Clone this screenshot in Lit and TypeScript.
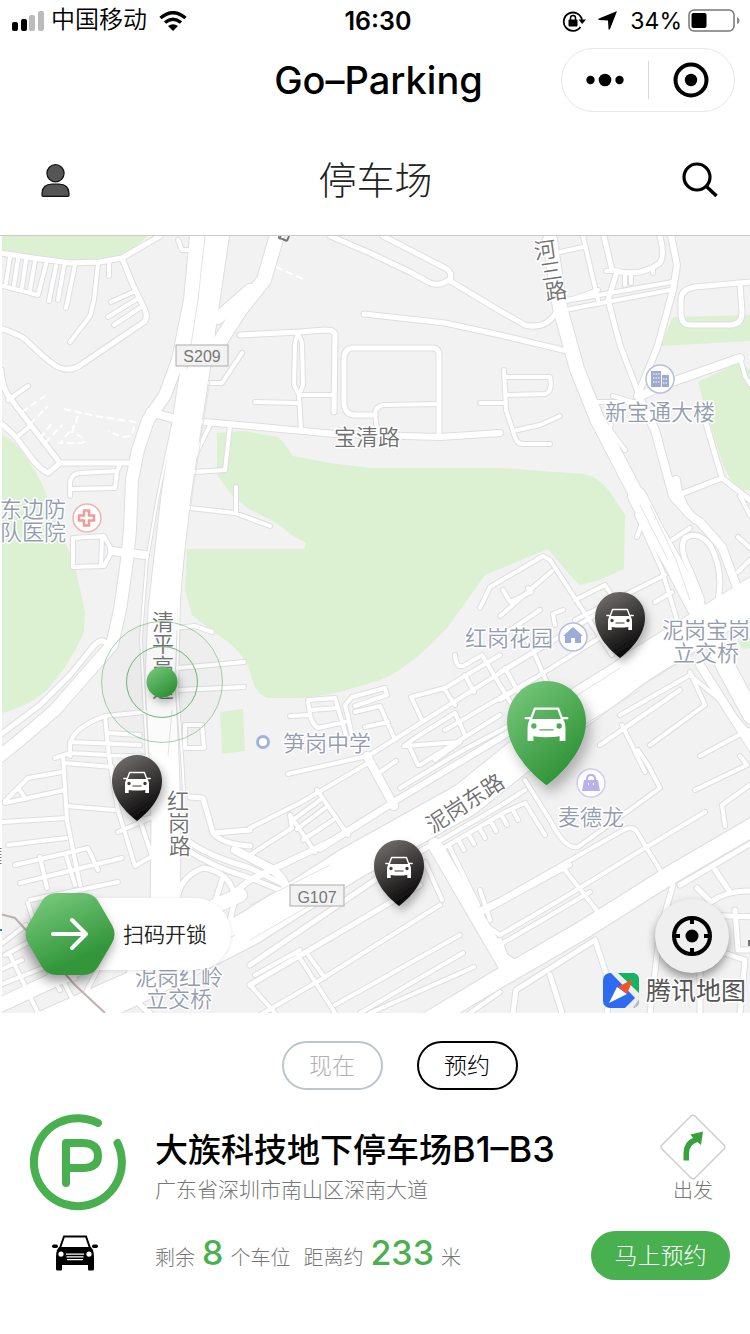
import { LitElement, html, svg, css } from "lit";
import { customElement, state } from "lit/decorators.js";
import { classMap } from "lit/directives/class-map.js";

/* Map data. Every coordinate is in the viewBox "0 236 750 777". */
const PARKS = [
  "M0 236H148L125 255Q100 260 67 260L0 251Z",
  "M2 434Q22 444 43 486L60 530L75 566L85 612L84 632Q70 665 45 692Q25 708 2 713Z",
  "M217 433L245 431L278 437L284 443L293 456L330 463L370 468L500 468L585 474Q600 478 610 492L625 515L624 569L600 580L580 585L568 573L548 549L485 575L448 627Q420 658 390 676Q340 695 300 698L268 698Q255 695 250 672Q243 650 215 633L192 615L185 590L187 549H304L306 543L290 534Q280 523 250 510L232 495L217 475Z",
  "M673 317L750 315V341L660 346Z",
  "M698 382L740 362L750 370V490L740 490Q728 480 722 462L712 430Z",
  "M220 712L243 709L245 751L222 754Z",
  "M738 641L750 638V648L742 649Z",
];

const ROADS: [number, string][] = [
  [2, "M173 425L158 496L147 560L143 610L141 640L147 756L150 800M198 432L186 510L179 600L177 690L182 756L184 790"],
  [4, "M10 257L6 283M18 259L14 285M26 260L22 287M35 261L30 290M3 286L38 295L46 264M56 266L49 301M64 266L58 300M75 265L66 308M98 264L94 300L90 316L70 342M109 263V276M133 292L111 302M137 299L108 317M141 307L114 325M8 400L28 386M17 437L30 426M178 240L182 250H192"],
  [4, "M298 334Q295 340 295 345L294 385L299 395L301 430M298 334Q302 340 302 345L303 385L299 395H333M255 402L298 403M210 383H222L242 353M230 426L225 470L194 472M210 425L192 462M190 508L235 513L270 526M236 513V487"],
  [4, "M375 415L378 435M375 415Q375 406 384 405L439 404M504 370L506 410L513 431Q516 444 522 444H550M504 403H480M504 377H550Q553 392 545 394L505 395M513 431L540 425L560 416"],
  [4, "M560 252L583 247M583 236L598 300M560 300L573 299L598 290M606 271H616M625 275V285M631 275V283M653 267V273M565 301L672 282M565 310L670 290M613 396L632 402M590 402L640 402M613 405L610 430L625 450M740 358L745 376L750 384"],
  [4, "M70 496V482Q72 473 80 473L117 471L120 465M117 471L115 488L72 489M73 538L104 536L112 551L104 566L73 567ZM102 537L101 565M175 628L195 626L212 632M178 668L244 662M178 690L244 687"],
  [4, "M70 756L70 745Q72 728 105 716L145 712M105 716L109 756L118 810L135 866L152 856L140 820L155 817M70 742L140 745M108 733L140 735M185 725H202L204 748H185ZM55 758L70 753L147 757M118 832L150 818"],
  [4, "M63 756L67 820L80 885M65 763L112 767M66 806L114 810M5 801L28 778L62 772M5 803L65 790M18 788L26 799M3 822L66 818M8 845L66 838M15 865L88 848L98 870M20 883L122 858M40 857L47 888M66 855L75 885M30 900L118 882M28 903L35 925"],
  [4, "M0 945L26 925M5 955L60 925M0 985L50 965L90 960M10 955L38 1013M0 1000L75 978M60 975L80 1013M30 940L60 990M100 965L82 1000M0 970L22 960"],
  [5, "M190 797L203 798L213 833L250 830M213 833Q222 844 250 846M187 840Q205 855 250 868L285 885L287 917M187 850Q215 868 250 878L280 890M178 915Q172 880 203 868Q232 872 235 900L230 920M222 880L214 905M130 965Q128 1000 150 1013"],
  [4, "M288 774L367 756M250 828L300 803L370 762M317 790L348 835M290 815L315 852M250 855L292 828L290 815M293 820L320 800M297 829L325 808M303 840L333 820M380 772L396 761M400 788L460 752L520 720M410 748L418 765M320 850L390 806"],
  [4, "M290 716L310 715L308 700L335 698L346 735M310 710L338 708M310 715Q312 724 318 728L345 722M352 735L345 705L352 697L385 688L387 695L355 706M355 712L380 706L395 740M365 727L388 722"],
  [4, "M365 758L500 673L600 612M422 720L411 697L445 688L500 655M435 760L460 742L404 746L415 738L455 713L465 735M420 765L500 715M445 690L455 705M465 675L474 692M482 655L512 705M455 655Q456 670 465 665L482 655M445 730L500 698L535 678"],
  [4, "M480 608L490 587L543 556L550 560L612 655M500 616L552 571M503 590L510 602L531 592L528 588M555 625L553 614L563 610M575 600L605 585L615 600M575 620L665 575M500 637L540 610M535 655L550 690M500 672L545 645M520 627L530 645M505 668L520 695M500 700L620 625M655 602L672 592"],
  [4, "M690 672L705 705L650 745M715 695L760 745M620 715L690 675L720 700M622 725L645 772M600 745L680 690M640 510L643 520L637 537M637 515L662 570L677 620M672 540L690 528M738 537L750 548M738 572L750 560M740 496L750 515"],
  [4, "M440 850L505 812L525 803L545 835M436 843L500 806L525 790M450 848L478 905M459 841L464 850M469 835L474 844M480 829L485 838M491 822L496 831M502 816L507 825M513 810L518 820M475 912L500 900L620 832Q633 824 637 832L660 870"],
  [4, "M500 935L560 900L645 848L705 812M565 870L598 912M503 943L590 892M500 940L505 955L516 963M525 780L550 820Q565 850 578 847L660 788L648 765L638 750M695 790L747 765L740 756M725 826L722 805L750 785M700 756L748 730"],
  [5, "M513 1013L516 990L595 940L610 985L607 1013M550 975L562 1013M673 885L660 930L650 1013M680 885L760 838M715 870L730 892M697 888L711 902Q730 888 760 892M735 910L738 950H760M700 915L760 917M715 950L745 960L740 1013M700 960V1013"],
  [4, "M320 980L440 905M320 980L260 1015M298 955L335 1013M306 952L325 978M250 985L275 1013M255 975L300 950M335 1005L460 935M360 1013L463 953M370 1013L474 967M470 1013L500 992M425 862L442 900M480 890L490 920M478 915L570 865M485 925L500 935"],
  [5, "M0 253L33 258L70 263L100 262L122 258L160 236M122 258L132 283L145 310Q148 318 144 322L82 364Q72 372 60 368Q50 364 25 339Q18 334 0 328M1 370Q2 388 10 398L60 463H130M60 463L48 473Q38 468 30 456L15 436L0 422"],
  [5, "M240 335L300 332L325 330Q336 330 335 336L334 412M353 348H432Q439 348 439 355V435M353 348Q344 348 344 360V405Q346 415 355 415H375M364 314L445 323L500 335L567 351M330 236L370 253L410 272L430 283Q440 287 450 279M383 236L445 268Q453 272 450 281L500 311L525 325Q545 330 556 313"],
  [5, "M604 236L612 270Q640 278 660 263Q665 255 660 236M616 275L608 300L620 345L638 392M750 282L695 287Q681 289 681 300V315Q682 325 690 325H730Q742 325 742 312L740 284M705 420L722 478L750 500M722 478L676 496"],
  [5, "M105 642Q100 638 92 648L70 675L40 705L0 735M718 600Q724 570 710 545Q698 530 685 538Q678 548 690 570L702 600M435 843L400 863L250 965M250 985L420 885"],
  [6, "M205 422L250 426L335 434L440 437L500 433M670 230L677 265L673 290L658 345L645 378L637 396M760 578L600 675L500 738L400 798L330 842L250 880L235 892"],
  [8, "M640 396L672 382L740 358M112 551L145 555M150 412L172 418M640 400L655 430L673 496L690 515M676 480Q680 512 700 522L722 547L738 590M367 756L394 806M700 665L760 760M287 905Q290 880 270 868L235 850"],
  [12, "M196 236L190 300L178 360L165 395L148 420L138 450L132 480L130 530L127 560L120 610L112 645L90 670L55 710L20 740L-5 760M250 290L218 318"],
  [14, "M435 845L505 965M550 240L560 308L577 369L597 419L637 496M280 225L264 280L240 310L208 360M240 895L150 935L0 1005"],
  [18, "M637 496L657 535L673 563L697 609L727 669L752 715M770 817L667 877L583 930L500 978L430 1020"],
  [29, "M216 225L205 300L195 370L176 496L163 610L160 680L164 756L166 820L165 930"],
  [34, "M770 585L640 665L546 735L465 800L350 864L250 928L130 990L40 1030"],
];

const LANES =
  "M205 236L198 300L187 370M210 380L190 510M172 710L168 756M640 505L668 560M650 505L676 560L690 600M250 905L330 865M250 940L345 885M520 732L620 668M560 740L640 690M430 835L500 790M140 985L235 935M635 690L700 650";

const TRAILS =
  "M22 412L45 396M30 424L48 406M64 409L95 416L135 422L132 435Q122 440 108 430M78 416L72 432Q90 440 82 443H60L75 425M45 443L62 425M40 438L54 421M276 267L303 279";

/* text, centre x, baseline y, kind, rotation in degrees */
const LABELS: [string, number, number, string, number?][] = [
  ["宝清路", 367, 445, "road"],
  ["新宝通大楼", 660, 420, "poi"],
  ["东边防", 33, 517, "poi"],
  ["队医院", 33, 540, "poi"],
  ["红岗花园", 509, 646, "poi"],
  ["泥岗宝岗", 706, 638, "poi"],
  ["立交桥", 706, 661, "poi"],
  ["笋岗中学", 327, 751, "poi"],
  ["麦德龙", 591, 825, "poi"],
  ["泥岗红岭", 179, 985, "poi"],
  ["立交桥", 179, 1007, "poi"],
  ["泥岗东路", 465, 811, "road", -33],
  ["河", 545, 258, "road", -8], ["三", 551, 279, "road", -8], ["路", 556, 299, "road", -8],
  ["清", 163, 630, "road"], ["平", 163, 652, "road"], ["高", 163, 674, "road"], ["速", 163, 697, "road"],
  ["红", 178, 809, "road"], ["岗", 179, 831, "road"], ["路", 180, 854, "road"],
];

const PINS = [
  { x: 595, y: 592, scale: 1, tone: "dark" },
  { x: 112, y: 755, scale: 1, tone: "dark" },
  { x: 374, y: 840, scale: 1, tone: "dark" },
  { x: 507, y: 681, scale: 1.58, tone: "green" },
];

const pin = (p: (typeof PINS)[number]) => svg`
  <g transform="translate(${p.x} ${p.y}) scale(${p.scale})">
    <path fill="url(#${p.tone})" filter="url(#drop)"
      d="M25 0C11 0 0 11 0 26C0 42 13 57 25 66C37 57 50 42 50 26C50 11 39 0 25 0Z"/>
    <g transform="translate(11 16.5)">
      <path fill="none" stroke="#fff" stroke-width="1.4" stroke-linejoin="round" stroke-linecap="round"
        d="M4 8L6.600 1H21.400L24 8M.8 7H3.500M24.500 7H27.200"/>
      <path fill="#fff" fill-rule="evenodd"
        d="M3.500 7.600H24.500Q26 10 26 13V21.500H22.300V18.500Q14 19.600 5.700 18.500V21.500H2V13Q2 10 3.500 7.600ZM6 10.300A1.700 1.700 0 1 0 6 13.700A1.700 1.700 0 1 0 6 10.300ZM22 10.300A1.700 1.700 0 1 0 22 13.700A1.700 1.700 0 1 0 22 10.300ZM9.500 14H18.500V14.900H9.500Z"/>
    </g>
  </g>`;

@customElement("parking-map")
class ParkingMap extends LitElement {
  static styles = css`
    :host { display: block; position: relative; aspect-ratio: 750 / 777; overflow: hidden; background: #f2f2f2; }
    .canvas { display: block; width: 100%; height: 100%; }
    .label { font-family: "Noto Sans CJK SC", sans-serif; font-size: 22px; font-weight: 350; text-anchor: middle;
      paint-order: stroke; stroke: #fff; stroke-width: 3px; stroke-linejoin: round; }
    .road { fill: #707070; }
    .poi { fill: #949cb0; }
    .shield { font-family: "Liberation Sans", sans-serif; font-size: 16px; fill: #777; text-anchor: middle; }
    .brand { font-family: "Noto Sans CJK SC", sans-serif; font-size: 25px; font-weight: 400; fill: #555;
      paint-order: stroke; stroke: #fff; stroke-width: 3px; }
    button { border: 0; padding: 0; background: none; cursor: pointer; font-family: Inter, "Noto Sans CJK SC", sans-serif; }
    .unlock { position: absolute; left: 25px; bottom: 38px; display: flex; align-items: center; }
    .hex { width: 90px; height: 82px; overflow: visible; position: relative; z-index: 1; filter: drop-shadow(-2px 6px 6px rgba(0, 0, 0, .4)); }
    .pill { margin-left: -50px; padding: 0 24px 2px 58px; height: 70px; display: flex; align-items: center;
      background: #fff; border-radius: 0 36px 36px 0; font-size: 21px; font-weight: 350; color: #222; box-shadow: 0 1px 4px rgba(0, 0, 0, .1); }
    .locate { position: absolute; right: 21px; bottom: 40px; width: 74px; height: 74px; border-radius: 50%;
      background: #efefef; display: grid; place-items: center; box-shadow: 0 5px 10px rgba(0, 0, 0, .4); }
  `;

  render() {
    return html`
      <svg class="canvas" viewBox="0 236 750 777" preserveAspectRatio="xMidYMid slice" aria-label="停车场地图">
        <defs>
          <linearGradient id="green" x1="0" y1="0" x2=".7" y2="1">
            <stop offset="0" stop-color="#7ccb80"/><stop offset="1" stop-color="#2b9033"/>
          </linearGradient>
          <linearGradient id="dark" x1=".2" y1="0" x2=".6" y2=".9">
            <stop offset="0" stop-color="#736e6d"/><stop offset="1" stop-color="#0e0e0e"/>
          </linearGradient>
          <filter id="drop" x="-30%" y="-20%" width="170%" height="160%">
            <feDropShadow dx="3" dy="5" stdDeviation="4" flood-opacity=".28"/>
          </filter>
        </defs>
        <rect y="236" width="750" height="777" fill="#f2f2f2"/>
        ${PARKS.map((d) => svg`<path d=${d} fill="#dcf1d2"/>`)}
        <g fill="none" stroke="#dedee1" stroke-linejoin="round" stroke-linecap="round">
          ${ROADS.map(([w, d]) => svg`<path d=${d} stroke-width=${w + 2}/>`)}
        </g>
        <g fill="none" stroke="#fff" stroke-linejoin="round" stroke-linecap="round">
          ${ROADS.map(([w, d]) => svg`<path d=${d} stroke-width=${w}/>`)}
        </g>
        <path d=${LANES} fill="none" stroke="#e3e3e5"/>
        <path d=${TRAILS} fill="none" stroke="#fff" stroke-width="2" stroke-dasharray="7 4"/>
        <path d="M0 914L15 918L35 940L75 985L105 1013" fill="none" stroke="#c4adad" stroke-width="2"/>
        <rect x="0" y="236" width="2" height="777" fill="#fff"/>
        <path d="M0 848V866" stroke="#777" stroke-width="3" stroke-dasharray="1 2"/>
        <path d="M0 930H2" stroke="#3d7f9a" stroke-width="2"/>
        <path d="M278 237L287 241M281 236L279 239M289 236L287 241" stroke="#777" stroke-width="2"/>
        <path d="M749 940V946" stroke="#777" stroke-width="2"/>

        <g fill="#f2f2f2" stroke="#ababab">
          <rect x="176" y="345" width="52" height="21"/>
          <rect x="290" y="885" width="54" height="21"/>
        </g>
        <text class="shield" x="202" y="362">S209</text>
        <text class="shield" x="317" y="903">G107</text>

        ${LABELS.map(([t, x, y, kind, turn]) => svg`
          <text class="label ${kind}" x=${x} y=${y} transform="rotate(${turn ?? 0} ${x} ${y - 8})">${t}</text>`)}

        <g fill="#fff" stroke-width="1.500">
          <circle cx="660" cy="379" r="14" stroke="#b9c1d9"/>
          <circle cx="573" cy="637" r="14" stroke="#b9c1d9"/>
          <circle cx="591" cy="783" r="14" stroke="#d3cdf0"/>
          <circle cx="87" cy="518" r="14" stroke="#f0b4b4"/>
        </g>
        <path fill="#9dabd2" d="M651 371H661V387H651ZM662 375H669V387H662Z"/>
        <path d="M653 374H660M653 378H660M653 382H660M663 379H667M663 383H667" stroke="#fff" stroke-dasharray="1.500 1"/>
        <path fill="#9dabd8" d="M573 627L583 636H581V643H575V638H571V643H565V636H563Z"/>
        <path fill="#bab0ee" d="M584 780H598L600 791H582Z"/>
        <path d="M587 782V779Q587 775 591 775Q595 775 595 779V782" fill="none" stroke="#bab0ee" stroke-width="2"/>
        <path d="M588 784H589M593 784H594" stroke="#fff" stroke-width="2"/>
        <path d="M84 510.500H89V515.500H94V520.500H89V525.500H84V520.500H79V515.500H84Z" fill="#fff" stroke="#f29a9a" stroke-width="2.500"/>
        <circle cx="263" cy="742" r="5.500" fill="#fff" stroke="#a3b3d8" stroke-width="3"/>

        <g fill="rgba(120,130,120,.03)" stroke="#6fb377">
          <circle cx="162" cy="682" r="60.500" stroke-opacity=".6"/>
          <circle cx="162" cy="682" r="35.500"/>
        </g>
        <circle cx="162" cy="682" r="15.500" fill="url(#green)" filter="url(#drop)"/>
        ${PINS.map(pin)}

        <g>
          <rect x="603" y="973" width="36" height="35" rx="7" fill="#2f6bf0"/>
          <path d="M617 973H632Q639 973 639 980V994Z" fill="#12b563"/>
          <path d="M611 973H618L639 993V1002Z" fill="#eee"/>
          <path d="M639 999V1001Q639 1008 632 1008H625Z" fill="#bcbcbc"/>
          <path d="M633 1008H625L639 994V999Z" fill="#eee"/>
          <path d="M617 987L627 994L609 1003Z" fill="#fff"/>
          <path d="M633 979L618 987L627 994Z" fill="#f4512c"/>
        </g>
        <text class="brand" x="646" y="1000">腾讯地图</text>
      </svg>

      <button class="unlock">
        <svg class="hex" viewBox="0 0 90 82" aria-hidden="true">
          <defs><linearGradient id="hexfill" x1=".1" y1="0" x2=".6" y2="1">
            <stop offset="0" stop-color="#7bcc80"/><stop offset=".85" stop-color="#33963a"/>
          </linearGradient></defs>
          <path fill="url(#hexfill)" d="M32 0H58Q68 0 73 8L87 32Q92 41 87 50L73 74Q68 82 58 82H32Q22 82 17 74L3 50Q-2 41 3 32L17 8Q22 0 32 0Z"/>
          <path d="M28 41H60M47 27L61 41L47 55" fill="none" stroke="#fff" stroke-width="4" stroke-linecap="round" stroke-linejoin="round"/>
        </svg>
        <span class="pill">扫码开锁</span>
      </button>

      <button class="locate" aria-label="定位">
        <svg width="40" height="40" viewBox="0 0 40 40">
          <circle cx="20" cy="20" r="18" fill="none" stroke="#000" stroke-width="4"/>
          <circle cx="20" cy="20" r="6.500"/>
          <path d="M20 2V8M20 32V38M2 20H8M32 20H38" stroke="#000" stroke-width="4"/>
        </svg>
      </button>
    `;
  }
}

@customElement("app-root")
class AppRoot extends LitElement {
  @state() private mode: "now" | "reserve" = "reserve";

  static styles = css`
    :host { display: block; background: #fff; color: #000; font-family: Inter, "Noto Sans CJK SC", sans-serif; }
    * { box-sizing: border-box; }
    svg { display: block; flex: none; }
    button { font-family: inherit; border: 0; padding: 0; background: none; color: inherit; cursor: pointer; }
    h1, h2, p { margin: 0; font-weight: inherit; }

    .status { display: grid; grid-template-columns: 1fr auto 1fr; align-items: center; height: 41px; padding: 0 10px 0 12px; }
    .carrier, .power { display: flex; align-items: center; }
    .carrier { font-size: 24px; line-height: 32px; gap: 7px; font-weight: 350; }
    .carrier span { padding-bottom: 2px; }
    .wifi { margin-left: 5px; }
    .time { font-size: 25px; line-height: 32px; font-weight: 600; padding-left: 4px; }
    .power { justify-content: flex-end; font-size: 23px; gap: 6px; }
    .arrow { margin: 0 7px 0 6px; }

    .title-bar { display: grid; grid-template-columns: 1fr auto 1fr; align-items: center; height: 78px; padding: 0 15px 0 22px; }
    .app-name { grid-column: 2; font-size: 38px; line-height: 48px; font-weight: 500; }
    .capsule { justify-self: end; display: flex; align-items: center; width: 174px; height: 64px; border: 1px solid #e8e8e8; border-radius: 32px; }
    .capsule button { flex: 1; display: grid; place-items: center; }
    .rule { width: 1px; height: 38px; background: #d9d9d9; }

    .page-bar { display: flex; align-items: center; justify-content: space-between; height: 117px; padding: 7px 31px 0 41px; border-bottom: 1px solid #c9cbc9; }
    .page-name { font-size: 38px; line-height: 54px; font-weight: 300; color: #222; padding-bottom: 2px; }

    .tabs { display: flex; justify-content: center; gap: 34px; padding: 28px 0 24px 49px; }
    .tab { width: 101px; height: 49px; border: 2px solid #bcc6cf; border-radius: 25px; font-size: 23px; font-weight: 300; color: #b0b0b0; padding-bottom: 4px; }
    .tab.active { border-color: #000; color: #000; }

    .lot { display: grid; grid-template-columns: 97px 1fr auto; column-gap: 28px; row-gap: 20px; align-items: start; padding: 0 20px 54px 30px; }
    .intro { padding-top: 12px; }
    .name { font-size: 33px; line-height: 48px; font-weight: 500; }
    .levels { font-size: 36px; line-height: 1; }
    .address { font-size: 21px; line-height: 32px; font-weight: 300; color: #777; }
    .go { justify-self: end; margin-right: 4px; display: flex; flex-direction: column; align-items: center; font-size: 20px; line-height: 22px; font-weight: 300; color: #777; }
    .car { justify-self: center; margin: 4px 8px 0 0; }
    .facts { display: flex; align-items: baseline; gap: 7px; height: 49px; font-size: 20px; line-height: 44px; font-weight: 300; color: #777; white-space: nowrap; }
    .facts strong { font-size: 34px; font-weight: 500; color: #49b04f; }
    .gap { margin-left: 6px; }
    .reserve { width: 139px; height: 49px; border-radius: 25px; background: #49b04f; color: #fff; font-size: 23px; font-weight: 300; padding-bottom: 3px; }
  `;

  render() {
    return html`
      <div class="status">
        <div class="carrier">
          <svg width="32" height="20" viewBox="0 0 32 20">
            <rect y="11" width="6" height="9" rx="2"/><rect x="9" y="8" width="6" height="12" rx="2"/>
            <rect x="17" y="4" width="6" height="16" rx="2" fill="#bbb"/><rect x="26" width="6" height="20" rx="2" fill="#bbb"/>
          </svg>
          <span>中国移动</span>
          <svg class="wifi" width="28" height="20" viewBox="0 0 28 20">
            <path d="M1.500 7Q14 -3.500 26.500 7M6 11.500Q14 5 22 11.500" fill="none" stroke="#000" stroke-width="3.500"/>
            <path d="M9 15Q14 11.500 19 15L14 20Z"/>
          </svg>
        </div>
        <span class="time">16:30</span>
        <div class="power">
          <svg width="24" height="22" viewBox="0 0 24 22">
            <path d="M18.500 17A9.200 9.200 0 1 1 20 10" fill="none" stroke="#000" stroke-width="1.800"/>
            <path d="M16.500 9.500H24L20.200 14Z"/>
            <rect x="6.500" y="9.500" width="9" height="7" rx="1"/>
            <path d="M8.500 10V8Q8.500 5.500 11 5.500Q13.500 5.500 13.500 8V10" fill="none" stroke="#000" stroke-width="1.500"/>
          </svg>
          <svg class="arrow" width="19" height="19" viewBox="0 0 19 19"><path d="M18 .5Q19 0 18.700 1L12 18Q11 19.500 10.500 18L10 9.500L1 9Q-.5 8.500 1 7.500Z"/></svg>
          <span>34%</span>
          <svg width="52" height="23" viewBox="0 0 52 23">
            <rect x="1" y="1" width="45" height="21" rx="5" fill="none" stroke="#777" stroke-width="1.500"/>
            <rect x="3.500" y="4" width="15" height="15" rx="2"/>
            <path d="M49 8Q51.500 9 51.500 11.500Q51.500 14 49 15Z" fill="#888"/>
          </svg>
        </div>
      </div>

      <div class="title-bar">
        <span class="app-name">Go–Parking</span>
        <div class="capsule">
          <button aria-label="更多">
            <svg width="38" height="14" viewBox="0 0 38 14"><circle cx="4.500" cy="7" r="4.200"/><circle cx="19" cy="7" r="6.300"/><circle cx="33.500" cy="7" r="4.200"/></svg>
          </button>
          <span class="rule"></span>
          <button aria-label="关闭">
            <svg width="36" height="36" viewBox="0 0 36 36"><circle cx="18" cy="18" r="15.500" fill="none" stroke="#000" stroke-width="4"/><circle cx="18" cy="18" r="6.200"/></svg>
          </button>
        </div>
      </div>

      <header class="page-bar">
        <button aria-label="我的">
          <svg width="29" height="33" viewBox="0 0 29 33">
            <g fill="#555" stroke="#111" stroke-width="1.200">
              <circle cx="14.500" cy="9.300" r="8.600"/>
              <path d="M1 31.500V29Q1.500 20.500 11 20.200H18Q27.500 20.500 28 29V31.500Q28 32.300 27 32.300H2Q1 32.300 1 31.500Z"/>
            </g>
          </svg>
        </button>
        <h1 class="page-name">停车场</h1>
        <button aria-label="搜索">
          <svg width="38" height="39" viewBox="0 0 38 39"><circle cx="16" cy="16" r="13" fill="none" stroke="#000" stroke-width="3.200"/><path d="M25 25L35.500 35" stroke="#000" stroke-width="3.500"/></svg>
        </button>
      </header>

      <parking-map></parking-map>

      <div class="tabs">
        <button class=${classMap({ tab: true, active: this.mode === "now" })} @click=${() => (this.mode = "now")}>现在</button>
        <button class=${classMap({ tab: true, active: this.mode === "reserve" })} @click=${() => (this.mode = "reserve")}>预约</button>
      </div>

      <section class="lot">
        <svg class="logo" width="97" height="97" viewBox="0 0 97 97" fill="none" stroke="#49b04f" stroke-linecap="round" stroke-linejoin="round">
          <path d="M68 9A44 44 0 1 0 87.500 29" stroke-width="8"/>
          <path d="M36 69V29H52Q68 29 68 42Q68 54 52 54H37" stroke-width="8"/>
        </svg>
        <div class="intro">
          <h2 class="name">大族科技地下停车场<span class="levels">B1–B3</span></h2>
          <p class="address">广东省深圳市南山区深南大道</p>
        </div>
        <button class="go">
          <svg width="66" height="66" viewBox="0 0 66 66">
            <path d="M31 2Q33 .5 35 2L64 31Q65.500 33 64 35L35 64Q33 65.500 31 64L2 35Q.5 33 2 31Z" fill="none" stroke="#d0d0d0" stroke-width="1.600"/>
            <path d="M23.500 46.500V39Q24 27 33 24L30.500 20.500L43 17.500L41 31L37.500 28Q29 31 29 39V46.500Z" fill="#37a23d"/>
          </svg>
          出发
        </button>

        <svg class="car" width="46" height="36" viewBox="0 0 46 36">
          <path d="M8 13L12 1.500H34L38 13" fill="none" stroke="#000" stroke-width="2"/>
          <path fill-rule="evenodd" d="M7 12H39L41 15Q42 18 42 22V34Q42 35.500 40.500 35.500H37Q36 35.500 36 34V30H10V34Q10 35.500 9 35.500H5.500Q4 35.500 4 34V22Q4 18 5 15ZM9 16.500A2.600 2.600 0 1 0 9 21.700A2.600 2.600 0 1 0 9 16.500ZM37 16.500A2.600 2.600 0 1 0 37 21.700A2.600 2.600 0 1 0 37 16.500ZM14 18.500V19.700H32V18.500ZM14.500 21.200V22.400H31.500V21.200ZM15 24V25.200H31V24Z"/>
          <rect y="9.500" width="6" height="3.500" rx="1.700"/><rect x="40" y="9.500" width="6" height="3.500" rx="1.700"/>
        </svg>
        <p class="facts">
          <span>剩余</span><strong>8</strong><span>个车位</span>
          <span class="gap">距离约</span><strong>233</strong><span>米</span>
        </p>
        <button class="reserve">马上预约</button>
      </section>
    `;
  }
}
